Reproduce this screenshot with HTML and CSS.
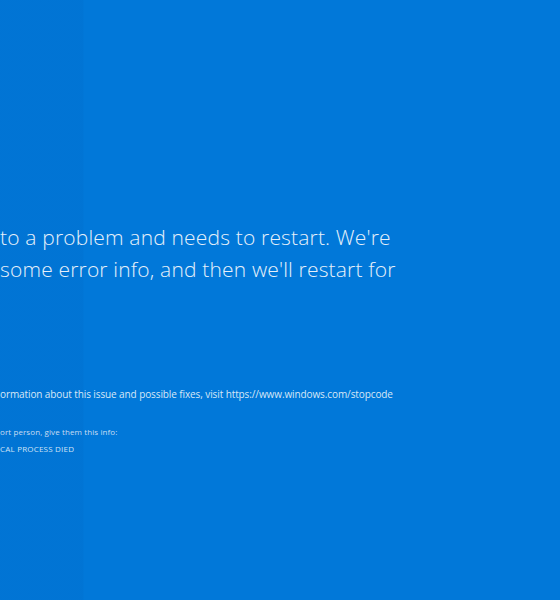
FILE: index.html
```html
<!DOCTYPE html>
<html lang="en">
<head>
    <meta charset="UTF-8">
    <title>stop</title>
    <link rel="stylesheet" href="styles.css">
</head>
<body>
<div id="screen">
    <!-- 大字说明 -->
    <div class="msg">
        <p>to a problem and needs to restart. We're</p>
        <p>some error info, and then we'll restart for</p>
    </div>
    <p class="info">ormation about this issue and possible fixes, visit https://www.windows.com/stopcode</p>
    <p class="support">ort person, give them this info:</p>
    <p class="code">CAL PROCESS DIED</p>
</div>
</body>
</html>
```

FILE: styles.css
```css
*{
    margin: 0;
    padding: 0;
}
html,body{
    height: 100%;
}
body{
    background: #0178d9;
    overflow: hidden;
}
#screen{
    height: 100%;
    display: flex;
    flex-direction: column;
    padding-top: 221px;
    box-sizing: border-box;
    background: linear-gradient(to right, rgba(0,60,140,0.06) 0, rgba(0,60,140,0.06) 83px, transparent 84px);
    color: #e6f0fa;
    font-family: "Open Sans", "Noto Sans", sans-serif;
    white-space: nowrap;
}
.msg{
    font-size: 21px;
    font-weight: 300;
    line-height: 32px;
    letter-spacing: 0.17px;
}
.info{
    margin-top: 102px;
    font-size: 10px;
    line-height: 14px;
    letter-spacing: -0.1px;
    color: #d8e7f6;
}
.support{
    margin-top: 26px;
    font-size: 8px;
    line-height: 10px;
    letter-spacing: 0.1px;
    color: #c8ddf2;
}
.code{
    margin-top: 7px;
    font-size: 8px;
    line-height: 10px;
    letter-spacing: 0.2px;
    color: #d0e3f5;
}
```
